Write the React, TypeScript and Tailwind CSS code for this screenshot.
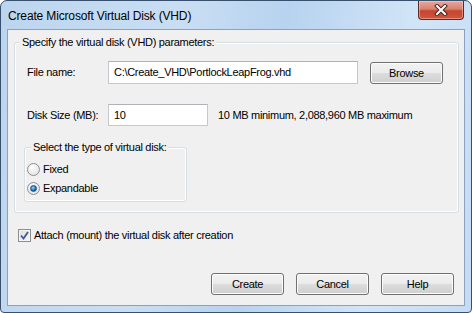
const font = { fontFamily: '"Liberation Sans", Arial, sans-serif' };

function Button({ label }: { label: string }) {
  return (
    <button className="w-[73px] h-[22px] rounded-[3px] border border-[#707070] bg-[linear-gradient(#f2f2f2_0%,#ebebeb_50%,#dddddd_50%,#cfcfcf_100%)] shadow-[inset_0_0_0_1px_#fcfcfc] text-[11px] tracking-[-0.3px] text-black leading-none">
      {label}
    </button>
  );
}

function Radio({ checked, label }: { checked?: boolean; label: string }) {
  return (
    <label className="flex items-center gap-[3px] h-[13px]">
      <span className="w-[13px] h-[13px] rounded-full border border-[#8e8f8f] bg-[radial-gradient(circle_at_40%_35%,#ffffff,#dcdcdc)] flex items-center justify-center">
        {checked && (
          <span className="w-[7px] h-[7px] rounded-full bg-[radial-gradient(circle_at_40%_35%,#9bd8ff,#1a6cb4_60%,#0f3f78)] border border-[#1b4e85]" />
        )}
      </span>
      <span>{label}</span>
    </label>
  );
}

export default function App() {
  return (
    <div className="w-[472px] h-[313px] bg-white" style={font}>
      <div className="w-[472px] h-[313px] flex flex-col rounded-t-[7px] rounded-b-[4px] border border-[#38506b] bg-[linear-gradient(100deg,#bcd5ee_0%,#c9def3_35%,#b7d3ef_55%,#d2e5f8_80%,#c4dbf2_100%)] px-[6px] pb-[6px]">
        {/* Title bar */}
        <div className="h-[28px] flex justify-between">
          <div className="pt-[8px] pl-[1px] text-[12px] tracking-[-0.15px] text-black leading-[14px]">
            Create Microsoft Virtual Disk (VHD)
          </div>
          <div className="w-[46px] h-[19px] mr-[1px] rounded-b-[4px] border border-t-0 border-[#5a2a24] bg-[linear-gradient(#e8a89c_0%,#d7826f_45%,#c6452f_55%,#d0553c_100%)] shadow-[inset_0_0_0_1px_rgba(255,220,210,0.45)] flex items-center justify-center">
            <svg width="14" height="12" viewBox="0 0 14 12">
              <path d="M3 2 L11 10 M11 2 L3 10" stroke="#4a2420" strokeWidth="4" strokeLinecap="square" />
              <path d="M3 2 L11 10 M11 2 L3 10" stroke="#ffffff" strokeWidth="2" strokeLinecap="square" />
            </svg>
          </div>
        </div>

        {/* Client area */}
        <div className="flex-1 flex flex-col border border-[#8aa2bd] bg-[#f0f0f0] text-[11px] tracking-[-0.3px] text-black leading-none">
          {/* Parameters group */}
          <div className="relative mt-[12px] ml-[6px] mr-[5px] h-[171px] rounded-[3px] border border-[#d5dfe5] shadow-[inset_0_0_0_1px_#ffffff] px-[12px]">
            <span className="absolute left-[5px] -top-[6px] px-[2px] bg-[#f0f0f0]">
              Specify the virtual disk (VHD) parameters:
            </span>

            <div className="flex items-center mt-[18px]">
              <span className="w-[81px]">File name:</span>
              <div className="w-[250px] h-[23px] border border-[#c5c8cd] border-t-[#aeb1b6] bg-white flex items-center px-[5px]">
                C:\Create_VHD\PortlockLeapFrog.vhd
              </div>
              <div className="ml-[12px] mt-[1px]">
                <Button label="Browse" />
              </div>
            </div>

            <div className="flex items-center mt-[20px]">
              <span className="w-[81px]">Disk Size (MB):</span>
              <div className="w-[100px] h-[22px] border border-[#c5c8cd] border-t-[#aeb1b6] bg-white flex items-center px-[5px]">
                10
              </div>
              <span className="ml-[10px]">10 MB minimum, 2,088,960 MB maximum</span>
            </div>

            {/* Disk type group */}
            <div className="relative mt-[21px] -ml-[3px] w-[163px] h-[55px] rounded-[3px] border border-[#d5dfe5] shadow-[inset_0_0_0_1px_#ffffff] pl-[2px] pt-[15px] flex flex-col gap-[6px]">
              <span className="absolute left-[6px] -top-[6px] px-[2px] bg-[#f0f0f0]">
                Select the type of virtual disk:
              </span>
              <Radio label="Fixed" />
              <Radio label="Expandable" checked />
            </div>
          </div>

          {/* Attach checkbox */}
          <label className="flex items-center gap-[3px] mt-[16px] ml-[10px]">
            <span className="w-[13px] h-[13px] border border-[#8e8f8f] bg-[linear-gradient(135deg,#dcdcdc,#f8f8f8)] shadow-[inset_0_0_0_1px_#f4f4f4] flex items-center justify-center">
              <svg width="9" height="9" viewBox="0 0 9 9">
                <path d="M1 4.5 L3.5 7.5 L8 1" stroke="#3d5a94" strokeWidth="1.8" fill="none" />
              </svg>
            </span>
            <span>Attach (mount) the virtual disk after creation</span>
          </label>

          {/* Buttons */}
          <div className="mt-auto mb-[10px] mr-[10px] flex justify-end gap-[12px]">
            <Button label="Create" />
            <Button label="Cancel" />
            <Button label="Help" />
          </div>
        </div>
      </div>
    </div>
  );
}
